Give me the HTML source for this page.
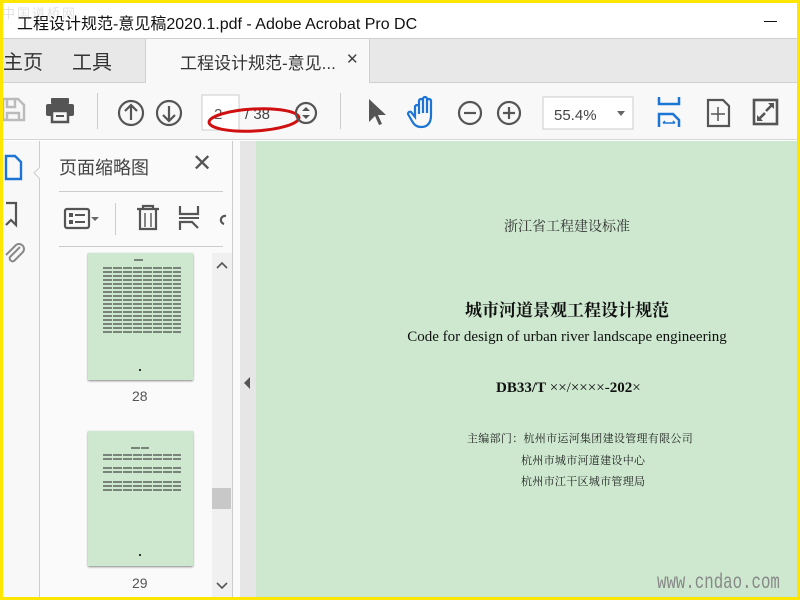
<!DOCTYPE html>
<html><head><meta charset="utf-8"><style>
*{margin:0;padding:0;box-sizing:border-box}
body{width:800px;height:600px;overflow:hidden;background:#ffe600;font-family:"Liberation Sans","Noto Sans CJK SC",sans-serif;position:relative}
.a{position:absolute}
#win{position:absolute;left:3px;top:3px;width:794px;height:594px;background:#fff;overflow:hidden}
.lines{background:repeating-linear-gradient(to bottom,#333 0 2px,transparent 2px 4px);opacity:.55;-webkit-mask:repeating-linear-gradient(to right,#000 0 9px,transparent 9px 10px)}
.cj{font-family:"Liberation Serif","Noto Serif CJK SC",serif}
.ic{stroke:#555;fill:none;stroke-width:2.2}
</style></head><body>
<div id="win">
<div class="a" style="left:0;top:0;width:794px;height:35px;background:#fff"></div>
<div class="a" style="left:-1px;top:0px;font-size:13px;color:#e2e2e2;letter-spacing:2px">中国道桥网</div>
<div class="a" style="left:14px;top:7px;font-size:16px;color:#111">工程设计规范-意见稿2020.1.pdf - Adobe Acrobat Pro DC</div>
<div class="a" style="left:761px;top:18px;width:13px;height:1px;background:#111"></div>
<div class="a" style="left:0;top:35px;width:794px;height:45px;background:#e8e8e8;border-top:1px solid #cfcfcf;border-bottom:1px solid #d0d0d0"></div>
<div class="a" style="left:0;top:43px;font-size:20px;color:#333">主页</div>
<div class="a" style="left:69px;top:43px;font-size:20px;color:#333">工具</div>
<div class="a" style="left:142px;top:36px;width:225px;height:46px;background:#f8f8f8;border-left:1px solid #d0d0d0;border-right:1px solid #d0d0d0"></div>
<div class="a" style="left:177px;top:46px;font-size:17px;color:#333">工程设计规范-意见...</div>
<div class="a" style="left:343px;top:47px;font-size:15px;color:#444">✕</div>
<div class="a" style="left:0;top:80px;width:794px;height:57px;background:#f8f8f8;border-bottom:1px solid #d4d4d4"></div>
<svg class="a" style="left:0;top:80px" width="794" height="57">
 <g fill="none" stroke="#bbb" stroke-width="2.5"><path d="M0 16h15l6 6v15H0z"/><path d="M4 16v8h8v-8M4 37v-7h12v7"/></g>
 <g fill="#555"><rect x="48" y="15" width="18" height="6" rx="1"/><rect x="43" y="21" width="28" height="12" rx="2"/><rect x="49" y="28" width="16" height="11" fill="#f8f8f8" stroke="#555" stroke-width="2.5"/><rect x="53" y="32" width="8" height="2"/></g>
 <rect x="94" y="10" width="1" height="36" fill="#ccc"/>
 <g class="ic" stroke-width="2.4"><circle cx="128" cy="30" r="12"/><path d="M128 37V23M122 28l6-6 6 6"/><circle cx="166" cy="30" r="12"/><path d="M166 23v14M160 32l6 6 6-6"/></g>
 <rect x="199" y="12" width="37" height="35" fill="#fff" stroke="#ccc"/>
 <text x="211" y="36" font-size="15" fill="#555" font-family="Liberation Sans">2</text>
 <text x="242" y="36" font-size="15" fill="#444" font-family="Liberation Sans">/ 38</text>
 <ellipse cx="251" cy="37" rx="45" ry="11" fill="none" stroke="#d01010" stroke-width="3" transform="rotate(-3 251 37)"/>
 <g class="ic"><circle cx="303" cy="30" r="10"/></g><path d="M299 28l4-4 4 4zM299 32l4 4 4-4z" fill="#555"/>
 <rect x="337" y="10" width="1" height="36" fill="#ccc"/>
 <path d="M366 16v23l6-6 4 9 3-1-4-9h8z" fill="#555"/>
 <path d="M412 34v-10a2 2 0 014 0v7-13a2 2 0 014 0v12-14a2 2 0 014 0v14-12a2 2 0 014 0v14q0 12-10 12-6 0-9-6l-4-7a2 2 0 013-2z" fill="none" stroke="#1c74d4" stroke-width="2.2"/>
 <g class="ic" stroke-width="2.4"><circle cx="467" cy="30" r="11"/><path d="M461 30h12"/><circle cx="506" cy="30" r="11"/><path d="M500 30h12M506 24v12"/></g>
 <rect x="540" y="14" width="90" height="32" fill="#fff" stroke="#ccc"/>
 <text x="551" y="37" font-size="15" fill="#444" font-family="Liberation Sans">55.4%</text>
 <path d="M614 28h8l-4 5z" fill="#666"/>
 <g fill="none" stroke="#1c74d4" stroke-width="2.5"><path d="M656 14v7h20v-7"/><path d="M656 44V31h14l6 6v7"/><path d="M660 40h12M660 40l2-2M672 40l-2-2" stroke-width="1.5"/></g>
 <g fill="none" stroke="#555" stroke-width="2.2"><path d="M705 17h15l6 6v20h-21z"/><path d="M715 24v14M708 31h14" stroke-width="1.5"/></g>
 <g fill="none" stroke="#555" stroke-width="2.6"><rect x="751" y="17" width="23" height="24"/><path d="M756 36l6-6M769 22l-6 6"/></g>
 <path d="M754 38v-6l6 6zM771 20v6l-6-6z" fill="#555"/>
</svg>
<div class="a" style="left:0;top:138px;width:37px;height:456px;background:#f8f8f8;border-right:1px solid #ccc"></div>
<svg class="a" style="left:0;top:138px" width="48" height="140">
 <path d="M3 15h9l6 6v17H3z" fill="none" stroke="#1c74d4" stroke-width="2.4"/>
 <path d="M3 62h10v22l-5-5-5 5" fill="none" stroke="#555" stroke-width="2.2"/>
 <path d="M17 106l-10 10a3 3 0 004 4l9-9a5 5 0 00-7-7l-10 10" fill="none" stroke="#888" stroke-width="2"/>
 <path d="M37 26l-6 6 6 6" fill="#fafafa" stroke="#ccc"/>
</svg>
<div class="a" style="left:37px;top:138px;width:193px;height:456px;background:#fafafa"></div>
<div class="a" style="left:56px;top:151px;font-size:18px;color:#444">页面缩略图</div>
<div class="a" style="left:189px;top:146px;font-size:24px;color:#555;font-weight:300">✕</div>
<div class="a" style="left:56px;top:188px;width:164px;height:1px;background:#ccc"></div>
<svg class="a" style="left:56px;top:195px" width="170" height="45">
 <rect x="6" y="11" width="24" height="19" rx="2" fill="none" stroke="#555" stroke-width="2.2"/>
 <rect x="10" y="15" width="4" height="4" fill="#555"/><rect x="10" y="22" width="4" height="4" fill="#555"/><rect x="16" y="16" width="10" height="2" fill="#555"/><rect x="16" y="23" width="10" height="2" fill="#555"/>
 <path d="M32 19h8l-4 4z" fill="#666"/>
 <rect x="56" y="5" width="1" height="32" fill="#ccc"/>
 <g fill="none" stroke="#555" stroke-width="2.2"><path d="M78 11h22M84 11V8h10v3M81 12v19h16V12"/><path d="M86 15v14M92 15v14" stroke-width="1.4"/></g>
 <g fill="none" stroke="#555" stroke-width="2.2"><path d="M121 8v8h18V8M121 32v-8h12l6 6"/></g>
 <rect x="120" y="19" width="20" height="2" fill="#555"/>
 <path d="M167 18a4 4 0 00-2 8" fill="none" stroke="#555" stroke-width="2.2"/>
</svg>
<div class="a" style="left:56px;top:243px;width:164px;height:1px;background:#ccc"></div>
<div class="a" style="left:85px;top:250px;width:105px;height:127px;background:#cde8cf;box-shadow:0 1px 2px #888"></div>
<div class="a lines" style="left:131px;top:256px;width:10px;height:2px"></div>
<div class="a lines" style="left:100px;top:264px;width:78px;height:66px"></div>
<div class="a" style="left:136px;top:366px;width:2px;height:2px;background:#333"></div>
<div class="a" style="left:129px;top:385px;font-size:14px;color:#555">28</div>
<div class="a" style="left:85px;top:428px;width:105px;height:135px;background:#cde8cf;box-shadow:0 1px 2px #888"></div>
<div class="a lines" style="left:128px;top:444px;width:18px;height:2px"></div>
<div class="a lines" style="left:100px;top:451px;width:78px;height:6px"></div>
<div class="a lines" style="left:100px;top:464px;width:78px;height:8px"></div>
<div class="a lines" style="left:100px;top:478px;width:78px;height:12px"></div>
<div class="a" style="left:136px;top:551px;width:2px;height:2px;background:#333"></div>
<div class="a" style="left:129px;top:572px;font-size:14px;color:#555">29</div>
<div class="a" style="left:209px;top:250px;width:20px;height:344px;background:#f0f0f0"></div>
<div class="a" style="left:209px;top:485px;width:19px;height:21px;background:#c8c8c8"></div>
<svg class="a" style="left:213px;top:258px" width="12" height="10"><path d="M1 7l5-5 5 5" fill="none" stroke="#555" stroke-width="1.6"/></svg>
<svg class="a" style="left:213px;top:578px" width="12" height="10"><path d="M1 2l5 5 5-5" fill="none" stroke="#555" stroke-width="1.6"/></svg>
<div class="a" style="left:229px;top:138px;width:8px;height:456px;background:#fafafa;border-left:1px solid #ccc"></div>
<div class="a" style="left:237px;top:138px;width:16px;height:456px;background:#e6e6e6"></div>
<svg class="a" style="left:240px;top:373px" width="8" height="14"><path d="M7 1L1 7l6 6z" fill="#555"/></svg>
<div class="a cj" style="left:253px;top:138px;width:541px;height:456px;background:#cde8cf;color:#222">
 <div class="a" style="left:0;width:622px;text-align:center;top:75px;font-size:14px;color:#333">浙江省工程建设标准</div>
 <div class="a" style="left:0;width:622px;text-align:center;top:155px;font-size:17px;font-weight:bold;color:#111">城市河道景观工程设计规范</div>
 <div class="a" style="left:0;width:622px;text-align:center;top:188px;font-size:15px;color:#111;font-family:'Liberation Serif',serif">Code for design of urban river landscape engineering</div>
 <div class="a" style="left:240px;top:239px;font-size:15px;color:#111;font-family:'Liberation Serif',serif"><b>DB33/T</b> ××/××××-<b>202</b>×</div>
 <div class="a" style="left:211px;top:289px;font-size:11px;color:#222;letter-spacing:0.3px">主编部门：杭州市运河集团建设管理有限公司</div>
 <div class="a" style="left:265px;top:311px;font-size:11px;color:#222;letter-spacing:0.3px">杭州市城市河道建设中心</div>
 <div class="a" style="left:265px;top:332px;font-size:11px;color:#222;letter-spacing:0.3px">杭州市江干区城市管理局</div>
 <div class="a" style="left:401px;top:431px;font-size:21px;color:#888;font-family:'Liberation Mono',monospace;transform:scaleX(.75);transform-origin:left">www.cndao.com</div>
</div>
</div>
</body></html>
